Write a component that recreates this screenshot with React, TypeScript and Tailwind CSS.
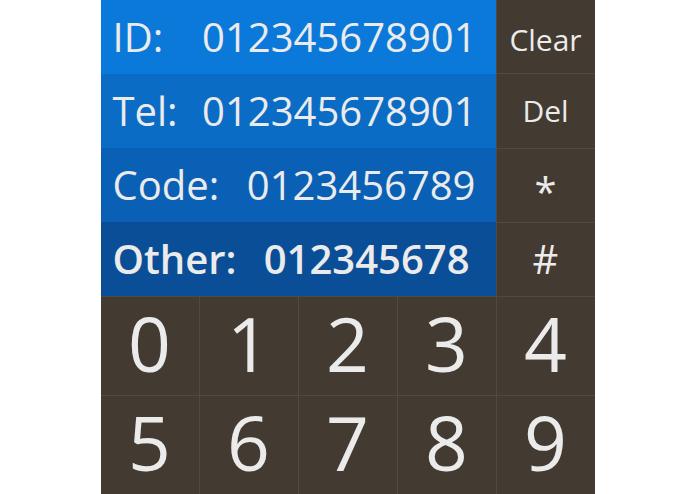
const fields = [
  { label: "ID:", value: "012345678901", bg: "bg-[#0b79d9]", bold: false, pr: "pr-[19px]" },
  { label: "Tel:", value: "012345678901", bg: "bg-[#0a6cc5]", bold: false, pr: "pr-[19px]" },
  { label: "Code:", value: "0123456789", bg: "bg-[#0a60b4]", bold: false, pr: "pr-[20px]" },
  { label: "Other:", value: "012345678", bg: "bg-[#094e97]", bold: true, pr: "pr-[26px]" },
];

// side keys: label plus a small nudge so glyphs sit like the device font
const sideKeys = [
  { label: "Clear", cls: "text-[30px] mt-[6px]" },
  { label: "Del", cls: "text-[30px]" },
  { label: "*", cls: "text-[40px] mt-[14px]" },
  { label: "#", cls: "text-[40px]" },
];

const digits = ["0", "1", "2", "3", "4", "5", "6", "7", "8", "9"];

export default function App() {
  return (
    <div
      className="w-[494px] h-[494px] mx-auto flex flex-col gap-px bg-[#524940] text-[#ebebeb]"
      style={{ fontFamily: '"Open Sans", "Noto Sans", sans-serif' }}
    >
      <div className="flex h-[296px] gap-px">
        <div className="w-[395px] flex flex-col">
          {fields.map((f) => (
            <div
              key={f.label}
              className={`h-[74px] flex items-center justify-between pl-3 ${f.pr} ${f.bg} text-[40px] ${
                f.bold ? "font-semibold" : "font-normal"
              }`}
            >
              <span>{f.label}</span>
              <span>{f.value}</span>
            </div>
          ))}
        </div>
        <div className="flex-1 grid grid-rows-4 gap-px">
          {sideKeys.map((k) => (
            <div key={k.label} className="flex items-center justify-center bg-[#433a31]">
              <span className={`leading-none ${k.cls}`}>{k.label}</span>
            </div>
          ))}
        </div>
      </div>
      <div className="flex-1 grid grid-cols-5 grid-rows-2 gap-px">
        {digits.map((d) => (
          <div key={d} className="flex items-center justify-center bg-[#433a31]">
            <span className="text-[75px] leading-none mb-[6px]">{d}</span>
          </div>
        ))}
      </div>
    </div>
  );
}
